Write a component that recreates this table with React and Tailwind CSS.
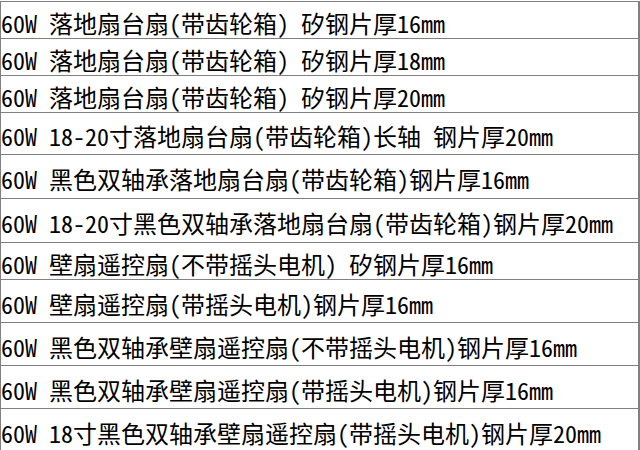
import React from "react";

const rows = [
  { text: "60W 落地扇台扇(带齿轮箱) 矽钢片厚16mm", h: "h-[37px]" },
  { text: "60W 落地扇台扇(带齿轮箱) 矽钢片厚18mm", h: "h-[37px]" },
  { text: "60W 落地扇台扇(带齿轮箱) 矽钢片厚20mm", h: "h-[37px]" },
  { text: "60W 18-20寸落地扇台扇(带齿轮箱)长轴 钢片厚20mm", h: "h-[42px]" },
  { text: "60W 黑色双轴承落地扇台扇(带齿轮箱)钢片厚16mm", h: "h-[44px]" },
  { text: "60W 18-20寸黑色双轴承落地扇台扇(带齿轮箱)钢片厚20mm", h: "h-[44px]" },
  { text: "60W 壁扇遥控扇(不带摇头电机) 矽钢片厚16mm", h: "h-[37px]" },
  { text: "60W 壁扇遥控扇(带摇头电机)钢片厚16mm", h: "h-[43px]" },
  { text: "60W 黑色双轴承壁扇遥控扇(不带摇头电机)钢片厚16mm", h: "h-[43px]" },
  { text: "60W 黑色双轴承壁扇遥控扇(带摇头电机)钢片厚16mm", h: "h-[43px]" },
  { text: "60W 18寸黑色双轴承壁扇遥控扇(带摇头电机)钢片厚20mm", h: "h-[43px]" },
];

export default function App() {
  return (
    <div className="w-[640px] h-[450px] overflow-hidden bg-white pt-[1px]">
      <div
        className="border-t border-l border-r-2 border-[#808080] text-black text-[24px] font-light"
        style={{ fontFamily: '"Noto Sans Mono CJK SC", "Noto Sans CJK SC", monospace' }}
      >
        {rows.map((r, i) => (
          <div
            key={i}
            className={`${r.h} flex items-center pt-[5px] border-b border-[#808080] whitespace-pre leading-none`}
          >
            {r.text}
          </div>
        ))}
      </div>
    </div>
  );
}
